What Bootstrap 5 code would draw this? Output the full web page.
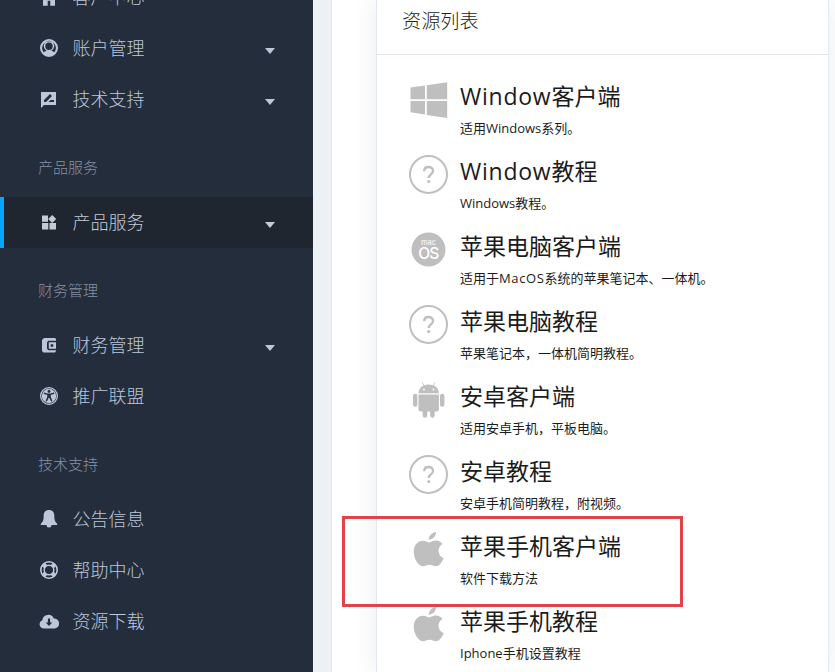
<!DOCTYPE html>
<html lang="zh-CN">
<head>
<meta charset="utf-8">
<meta name="viewport" content="width=device-width, initial-scale=1">
<title>资源下载</title>
<link href="https://cdn.jsdelivr.net/npm/bootstrap@5.3.0/dist/css/bootstrap.min.css" rel="stylesheet">
<style>
body{font-family:"Open Sans","Noto Sans CJK SC",sans-serif;background:#eef1f4;height:672px;overflow:hidden}
.side{width:313px;background:#242d3c;margin-top:-28px;height:700px}
.side .nav-link{height:51px;padding:0 38px 0 36px;color:#bcc7da;font-size:18px;font-weight:300;line-height:51px;border-left:4px solid transparent;padding-left:35px}
.side .nav-link.active{background:#1f262f;border-left-color:#08a5ff;color:#c3ccd6}
.side .nav-link svg{width:20px;height:20px;margin-right:13.5px;margin-top:-1px;fill:currentColor}
.side .caret{width:0;height:0;border:5px solid transparent;border-top:6px solid currentColor;border-bottom:0;margin-top:4px}
.group-name{height:72px;padding:31px 0 0 38px;font-size:15px;line-height:22px;color:#8490a4;font-weight:300}
.main-pane{margin-left:18px;background:#fff;border-left:1px solid #e6e9ed}
.panel{margin-left:44px;width:453px;height:672px;background:#fff;border:1px solid #e3e7ee;border-width:0 1px;box-shadow:0 0 24px rgba(70,100,140,.12)}
.panel-title{height:55px;padding:7px 0 0 25px;border-bottom:1px solid #e5e7f0;font-size:19.2px;line-height:28px;font-weight:300;color:#222}
.res-list{padding:20px 0 0 32px}
.res{height:75px}
.res svg{width:40px;height:40px;margin-top:5px;fill:#bfbfbf;flex:none}
.res-text{padding-left:11px;white-space:nowrap;color:#1b1b1b}
.res-name{font-size:23px;line-height:32px;height:37px;padding-top:5px;margin:0;font-weight:400}
.res-note{font-size:13px;line-height:20px;padding-top:6px}
.latin{letter-spacing:.75px}
.latin-note{letter-spacing:.6px}
.focus-box{left:342px;top:516px;width:341px;height:91px;border:3px solid #e24346}
</style>
</head>
<body>
<svg class="d-none" xmlns="http://www.w3.org/2000/svg">
<symbol id="home" viewBox="0 0 20 20"><path d="M2 10 10 3l8 7v2h-2v6.700h-4.700v-5H8.700v5H4V12H2z"/></symbol>
<symbol id="user" viewBox="0 0 20 20"><path fill-rule="evenodd" d="M10 1a9 9 0 1 0 0 18 9 9 0 0 0 0-18zm0 2.200a6.800 6.800 0 0 1 5.200 11.200c-.8-1-1.800-1.400-2.900-1.700a5.200 5.200 0 1 0-4.600 0c-1.100.3-2.100.7-2.900 1.700A6.800 6.800 0 0 1 10 3.200zm0 1.300a3.700 3.700 0 1 1 0 7.400 3.700 3.700 0 0 1 0-7.400z"/></symbol>
<symbol id="note" viewBox="0 0 20 20"><path fill-rule="evenodd" d="M2 3h15v13H5l-3 3zm3 10h2l6-6-2-2-6 6zm4.500 0H15v-2h-3.500z"/></symbol>
<symbol id="widgets" viewBox="0 0 20 20"><path d="M3 3.500h6v6.300H3zM3 11h6.300v6.500H3zM10.500 11H17v6.500h-6.500zM13.200 3 17.200 7l-4 4-4-4z"/></symbol>
<symbol id="wallet" viewBox="0 0 20 20"><path fill-rule="evenodd" d="M5 3h11l1 1v1.800H9.500L8 7.200v6.500l1.500 1.500H17V16l-1 1.500H4.500L3 16V5zM9.800 7.200H17v6.500H9.800zm1.900 2v2.500h2.600V9.200z"/></symbol>
<symbol id="person" viewBox="0 0 20 20"><path fill-rule="evenodd" d="M10 1a9 9 0 1 0 0 18 9 9 0 0 0 0-18zm0 1.300a7.700 7.700 0 1 1 0 15.400 7.700 7.700 0 0 1 0-15.400z"/><path fill-rule="evenodd" d="M10 2.800a7.200 7.200 0 1 0 0 14.400 7.200 7.200 0 0 0 0-14.400zm0 1a1.500 1.500 0 1 1 0 3 1.500 1.500 0 0 1 0-3zM5 6.600l3.700.8h2.600l3.700-.8.2 1.300-3.500.9.100 2.200 1.600 4-1.300.6-1.800-3.900h-.6l-1.800 3.900-1.300-.6 1.600-4 .1-2.200-3.500-.9z"/></symbol>
<symbol id="bell" viewBox="0 0 20 20"><path d="M10 1c3.300 0 5.300 2.200 5.300 5.500 0 4.500.7 6.500 2.900 8.200v1.300H1.800v-1.300c2.200-1.700 2.900-3.700 2.900-8.200C4.700 3.200 6.700 1 10 1zM7.500 16h5a2.500 2.500 0 0 1-5 0z"/></symbol>
<symbol id="ring" viewBox="0 0 20 20"><g fill="none" stroke="currentColor"><circle cx="10" cy="10" r="8.200" stroke-width="1.600"/><circle cx="10" cy="10" r="4.800" stroke-width="1.500"/><path stroke-width="4.400" d="m4 4 3 3m6 6 3 3m0-12-3 3m-6 6-3 3"/></g></symbol>
<symbol id="cloud" viewBox="0 0 20 20"><path fill-rule="evenodd" d="M5 17.500a4.300 4.300 0 0 1-1.700-8.300A6 6 0 0 1 14.800 7.500a5 5 0 0 1 .7 10zM8.900 7.500v4H6.700L10 15l3.300-3.500h-2.200v-4z"/></symbol>
<symbol id="win" viewBox="0 0 40 40"><path d="M1.500 7.600 16 5.500v13.700H1.500zM17.800 5.200 38.200 2.200v17H17.800zM1.500 21h14.500v13.400L1.500 32.300zM17.800 21h20.400v17l-20.400-3z"/></symbol>
<symbol id="help" viewBox="0 0 40 40"><circle cx="19.500" cy="19.500" r="18.500" fill="none" stroke="#bfbfbf" stroke-width="2"/><path d="M15.200 16.200c0-3 1.900-4.200 4.300-4.200s4.500 1.400 4.500 3.900c0 3.400-4.300 3.500-4.300 7" fill="none" stroke="#bfbfbf" stroke-width="2.300"/><circle cx="19.700" cy="26.500" r="1.600"/></symbol>
<symbol id="mac" viewBox="0 0 40 40"><circle cx="19.500" cy="19.500" r="17"/><text x="19.500" y="15" text-anchor="middle" font-family="Inter" font-size="7.500" fill="#fff">mac</text><text x="19.300" y="28.500" text-anchor="middle" font-family="Inter" font-size="15.500" font-weight="500" letter-spacing="-.8" fill="#fff">OS</text></symbol>
<symbol id="android" viewBox="0 0 40 40"><path d="M9.500 13.300c.1-3.800 2.100-6.300 5-7.700l-1.700-3 .7-.4 1.800 3.100a12 12 0 0 1 8.800 0l1.800-3.100.7.400-1.700 3c2.900 1.400 4.900 3.900 5 7.700zM9.500 14.500h20.400v14.700c0 1.300-.9 2.200-2.200 2.200h-2v4a2.300 2.300 0 0 1-4.600 0v-4h-2.800v4a2.300 2.300 0 0 1-4.600 0v-4h-2c-1.300 0-2.200-.9-2.200-2.200z"/><rect x="4" y="13.800" width="4.400" height="13" rx="2.200"/><rect x="31" y="13.800" width="4.400" height="13" rx="2.200"/><g fill="#fff"><circle cx="15" cy="9.500" r=".9"/><circle cx="24.400" cy="9.500" r=".9"/></g></symbol>
<symbol id="apple" viewBox="0 0 40 40"><path d="M19.800 9.800c-.1-4 3.500-7.300 7.200-7.700.3 4.200-3.500 7.600-7.200 7.700zM20 12.500c1.500 0 3.700-1.900 7-1.900 2.700 0 5 1.300 6.500 3.400-5.900 3.500-5 11.800 1.200 14.100C33.500 31.500 30.500 36.300 27 36.300c-2.500 0-3.600-1.500-6.600-1.500s-3.900 1.500-6.400 1.500c-4.400 0-9.300-7.600-9.300-14.300 0-7.200 4.600-11.200 9-11.200 2.900 0 5 1.700 6.300 1.700z"/></symbol>
</svg>
<div class="d-flex">
<nav class="side nav flex-column flex-nowrap flex-shrink-0">
<a class="nav-link d-flex align-items-center"><svg><use href="#home"/></svg><span>客户中心</span></a>
<a class="nav-link d-flex align-items-center"><svg><use href="#user"/></svg><span>账户管理</span><i class="caret ms-auto"></i></a>
<a class="nav-link d-flex align-items-center"><svg><use href="#note"/></svg><span>技术支持</span><i class="caret ms-auto"></i></a>
<div class="group-name">产品服务</div>
<a class="nav-link active d-flex align-items-center"><svg><use href="#widgets"/></svg><span>产品服务</span><i class="caret ms-auto"></i></a>
<div class="group-name">财务管理</div>
<a class="nav-link d-flex align-items-center"><svg><use href="#wallet"/></svg><span>财务管理</span><i class="caret ms-auto"></i></a>
<a class="nav-link d-flex align-items-center"><svg><use href="#person"/></svg><span>推广联盟</span></a>
<div class="group-name">技术支持</div>
<a class="nav-link d-flex align-items-center"><svg><use href="#bell"/></svg><span>公告信息</span></a>
<a class="nav-link d-flex align-items-center"><svg><use href="#ring"/></svg><span>帮助中心</span></a>
<a class="nav-link d-flex align-items-center"><svg><use href="#cloud"/></svg><span>资源下载</span></a>
</nav>
<main class="main-pane flex-grow-1">
<section class="panel">
<div class="panel-title">资源列表</div>
<div class="res-list">
<div class="res d-flex"><svg><use href="#win"/></svg><div class="res-text"><h2 class="res-name"><span class="latin">Window</span>客户端</h2><div class="res-note">适用Windows系列。</div></div></div>
<div class="res d-flex"><svg><use href="#help"/></svg><div class="res-text"><h2 class="res-name"><span class="latin">Window</span>教程</h2><div class="res-note">Windows教程。</div></div></div>
<div class="res d-flex"><svg><use href="#mac"/></svg><div class="res-text"><h2 class="res-name">苹果电脑客户端</h2><div class="res-note">适用于<span class="latin-note">MacOS</span>系统的苹果笔记本、一体机。</div></div></div>
<div class="res d-flex"><svg><use href="#help"/></svg><div class="res-text"><h2 class="res-name">苹果电脑教程</h2><div class="res-note">苹果笔记本，一体机简明教程。</div></div></div>
<div class="res d-flex"><svg><use href="#android"/></svg><div class="res-text"><h2 class="res-name">安卓客户端</h2><div class="res-note">适用安卓手机，平板电脑。</div></div></div>
<div class="res d-flex"><svg><use href="#help"/></svg><div class="res-text"><h2 class="res-name">安卓教程</h2><div class="res-note">安卓手机简明教程，附视频。</div></div></div>
<div class="res d-flex"><svg><use href="#apple"/></svg><div class="res-text"><h2 class="res-name">苹果手机客户端</h2><div class="res-note">软件下载方法</div></div></div>
<div class="res d-flex"><svg><use href="#apple"/></svg><div class="res-text"><h2 class="res-name">苹果手机教程</h2><div class="res-note">Iphone手机设置教程</div></div></div>
</div>
</section>
</main>
</div>
<div class="focus-box position-absolute"></div>
<script src="https://cdn.jsdelivr.net/npm/bootstrap@5.3.0/dist/js/bootstrap.bundle.min.js"></script>
</body>
</html>
